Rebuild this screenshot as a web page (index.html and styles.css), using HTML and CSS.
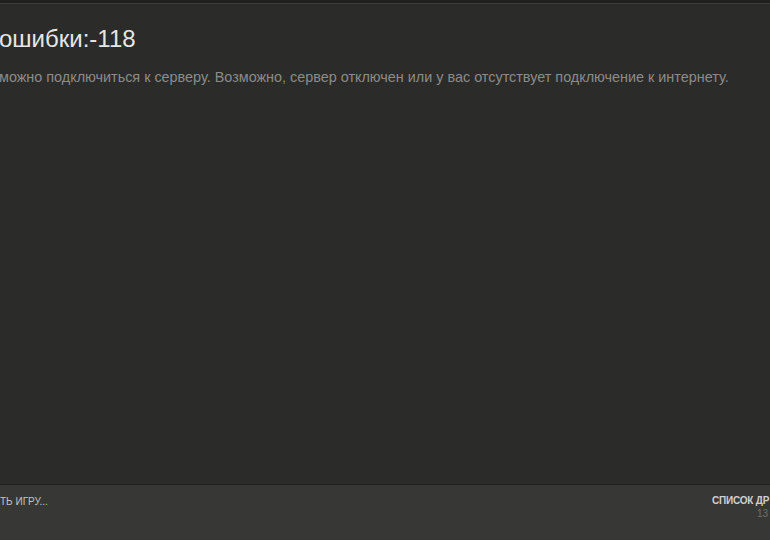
FILE: index.html
```html
<!DOCTYPE html>
<html lang="ru">
<head>
    <meta charset="UTF-8">
    <meta name="viewport" content="width=device-width, initial-scale=1.0">
    <title>Steam</title>
    <link rel="stylesheet" href="styles.css">
</head>
<body>
    <div class="topbar"></div>

    <!-- Error message -->
    <div class="content">
        <h1 class="error-title">ошибки:-118</h1>
        <p class="error-text">можно подключиться к серверу. Возможно, сервер отключен или у вас отсутствует подключение к интернету.</p>
    </div>

    <!-- Bottom bar -->
    <div class="footer">
        <div class="footer-left">ть игру...</div>
        <div class="footer-right">
            <div class="friends">список др</div>
            <div class="online">13</div>
        </div>
    </div>
</body>
</html>
```

FILE: styles.css
```css
html, body {
    height: 100%;
}
body {
    margin: 0;
    background-color: #2b2b29;
    font-family: "Liberation Sans", Arial, sans-serif;
    display: flex;
    flex-direction: column;
    overflow: hidden;
}
.topbar {
    height: 3px;
    background-color: #20201f;
    border-bottom: 1px solid #3c3c3a;
}
.content {
    flex: 1;
    margin-left: -1px;
}
.error-title {
    margin: 21px 0 0 0;
    font-size: 24px;
    font-weight: normal;
    color: #e6e6e6;
    line-height: 28px;
}
.error-text {
    margin: 16px 0 0 0;
    font-size: 14.4px;
    color: #8c8c8a;
    line-height: 17px;
    white-space: nowrap;
}
.footer {
    height: 55px;
    background-color: #373735;
    border-top: 1px solid #1f1f1e;
    display: flex;
    justify-content: space-between;
    align-items: flex-start;
    font-size: 10px;
    text-transform: uppercase;
}
.footer-left {
    margin-top: 11px;
    color: #c4c4c2;
}
.footer-right {
    width: 58px;
    margin-top: 10px;
    white-space: nowrap;
}
.friends {
    color: #d0d0ce;
    font-weight: bold;
    letter-spacing: -0.2px;
}
.online {
    color: #6f6f6d;
    padding-left: 45px;
    margin-top: 2px;
}
```
